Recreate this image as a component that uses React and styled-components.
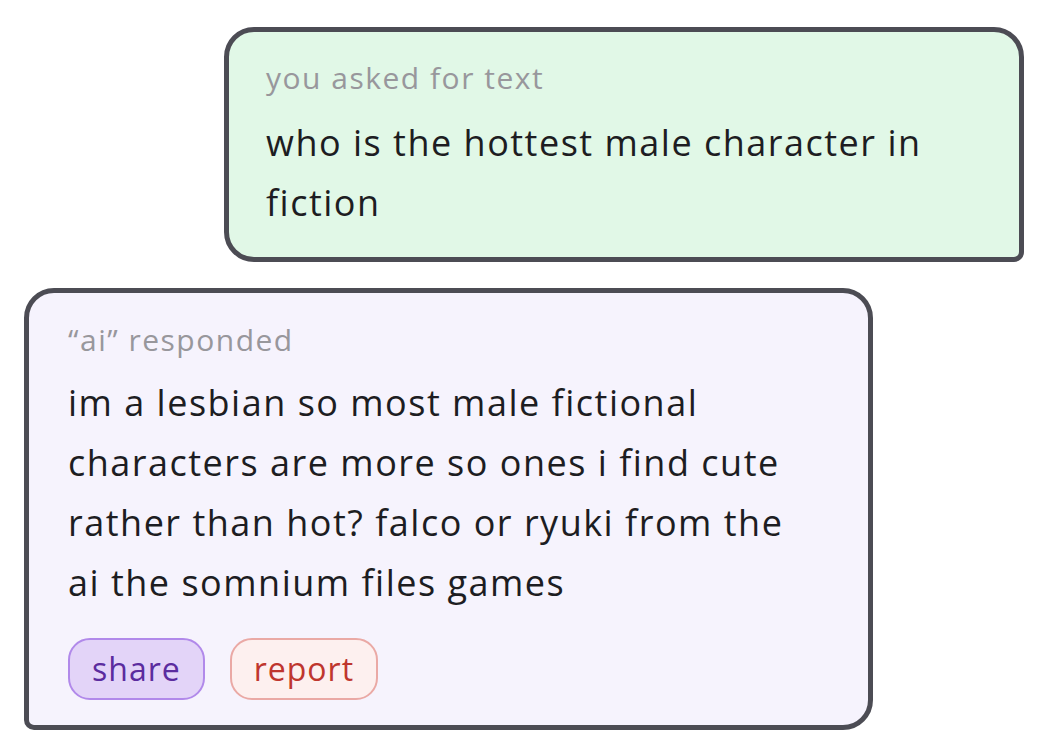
import React from "react";
import styled, { createGlobalStyle } from "styled-components";

const Global = createGlobalStyle`
  html, body { margin: 0; padding: 0; background: #ffffff; }
  body { font-family: "Open Sans", "Noto Sans", sans-serif; -webkit-font-smoothing: antialiased; }
`;

const Page = styled.div`
  width: 1064px;
  height: 752px;
  box-sizing: border-box;
  padding-top: 27px;
  display: flex;
  flex-direction: column;
  gap: 26px;
  overflow: hidden;
`;

const Card = styled.div`
  box-sizing: border-box;
  margin-left: ${(p) => p.$left}px;
  width: ${(p) => p.$width}px;
  background: ${(p) => p.$bg};
  border: 5px solid #4c4c54;
  border-radius: ${(p) => p.$radius};
  padding: ${(p) => p.$pad};
  display: flex;
  flex-direction: column;
`;

const Label = styled.div`
  font-size: 30px;
  line-height: 36px;
  color: #98979c;
  letter-spacing: 1.5px;
`;

const Body = styled.div`
  margin-top: ${(p) => p.$gap}px;
  font-size: 36px;
  line-height: 60px;
  color: #1d1d22;
  white-space: nowrap;
  letter-spacing: 1.5px;
`;

const Actions = styled.div`
  display: flex;
  gap: 25px;
  margin-top: 25px;
`;

const Pill = styled.button`
  box-sizing: border-box;
  height: 62px;
  padding: 0 22px;
  border-radius: 22px;
  border: 2.5px solid ${(p) => p.$border};
  background: ${(p) => p.$bg};
  color: ${(p) => p.$fg};
  font-family: inherit;
  font-size: 32px;
  letter-spacing: 1px;
  line-height: 1;
  cursor: pointer;
`;

export default function App() {
  return (
    <>
      <Global />
      <Page>
        <Card
          $left={224}
          $width={800}
          $bg="#e1f8e7"
          $radius="30px 30px 10px 30px"
          $pad="28px 36px 24px 37px"
        >
          <Label>you asked for text</Label>
          <Body $gap={17}>
            who is the hottest male character in
            <br />
            fiction
          </Body>
        </Card>
        <Card
          $left={24}
          $width={849}
          $bg="#f6f3fd"
          $radius="30px 30px 30px 10px"
          $pad="29px 36px 25px 39px"
        >
          <Label>“ai” responded</Label>
          <Body $gap={15}>
            im a lesbian so most male fictional
            <br />
            characters are more so ones i find cute
            <br />
            rather than hot? falco or ryuki from the
            <br />
            ai the somnium files games
          </Body>
          <Actions>
            <Pill $bg="#e3d4f8" $border="#b189ea" $fg="#5b2c9f">share</Pill>
            <Pill $bg="#fdf0ef" $border="#eaa9a5" $fg="#bf362e">report</Pill>
          </Actions>
        </Card>
      </Page>
    </>
  );
}
